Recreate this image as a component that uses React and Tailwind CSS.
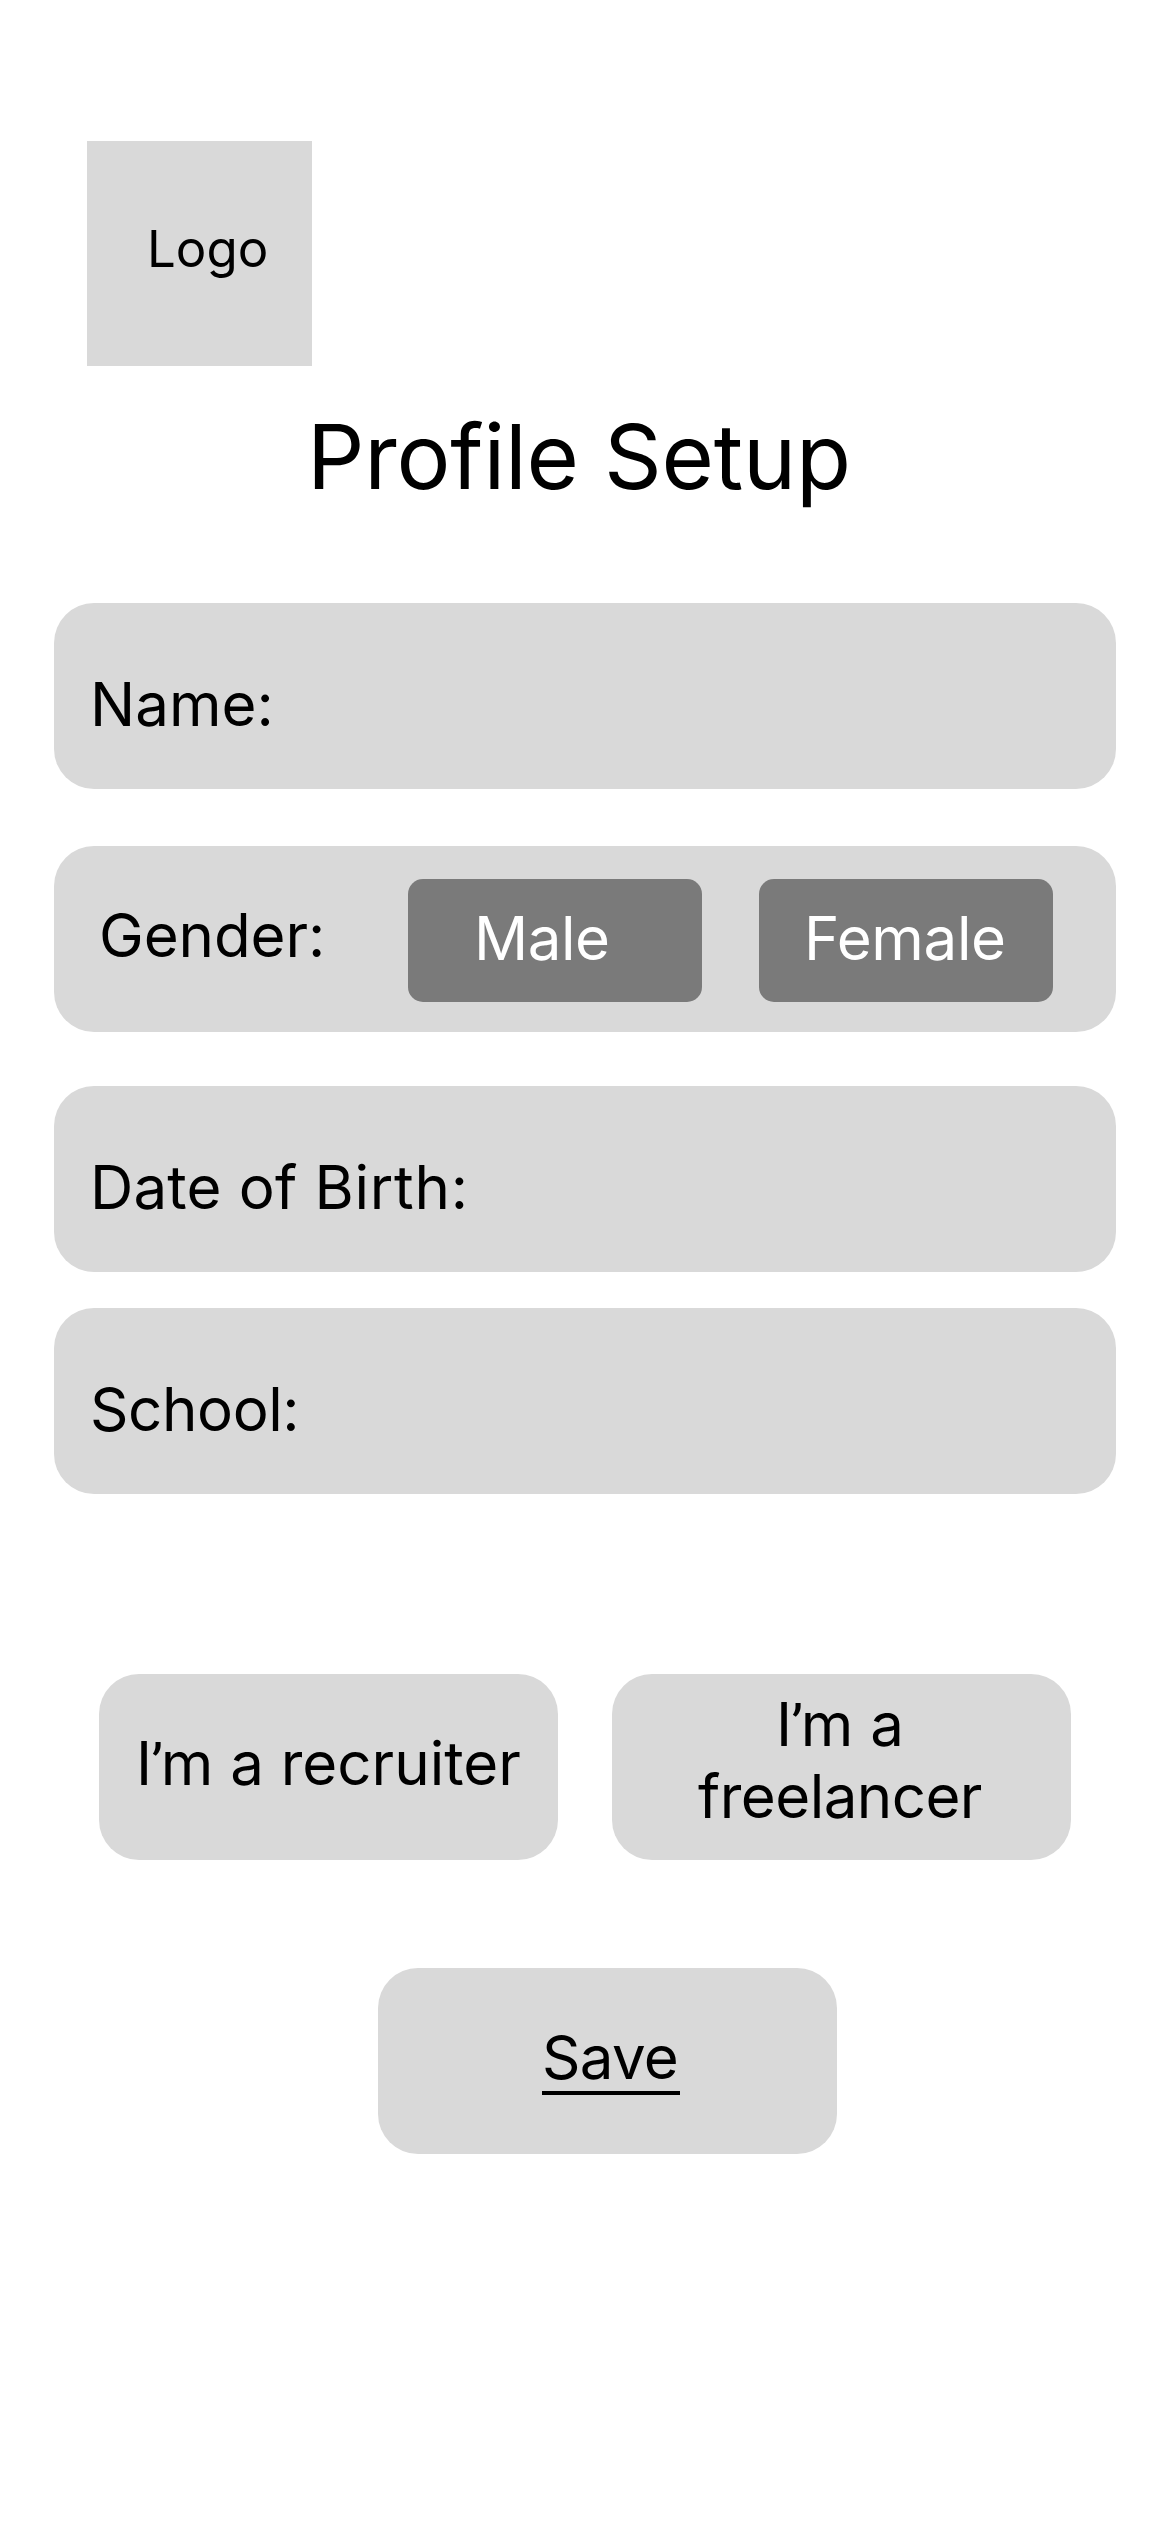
const card = "shrink-0 rounded-[40px] bg-[#d9d9d9] text-[60px] leading-[73px]";
const field = "ml-[54px] w-[1062px] h-[186px] pl-[36px] pt-[65px]";
const genderButton = "flex items-start w-[294px] h-[123px] rounded-[15px] bg-[#7a7a7a] text-white pt-[23px]";

function Im() {
  return (
    <>
      <span className="tracking-[-0.7px]">I</span>
      <span className="font-['Roboto',sans-serif] text-[57px] leading-none tracking-[-2.1px]">’</span>
      m
    </>
  );
}

export default function App() {
  return (
    <main className="w-[1170px] h-[2532px] bg-white text-black font-['Inter',sans-serif] flex flex-col overflow-hidden">
      <div className="mt-[141px] ml-[87px] w-[225px] h-[225px] shrink-0 bg-[#d9d9d9] pt-[77px] pl-[60px] text-[51px] leading-[62px]">
        Logo
      </div>
      <h1 className="mt-[36px] h-[109px] ml-[307px] text-[90px] leading-[109px] tracking-[-0.19px] whitespace-nowrap">
        Profile Setup
      </h1>

      <section className={`${card} ${field} mt-[92px]`}>Name:</section>
      <section className={`${card} mt-[57px] ml-[54px] w-[1062px] h-[186px] flex pt-[33px]`}>
        <span className="w-[354px] pl-[45px] pt-[20px] tracking-[-0.1px]">Gender:</span>
        <button className={`${genderButton} pl-[66px] tracking-[-0.5px]`}>Male</button>
        <button className={`${genderButton} ml-[57px] pl-[45px] tracking-[-0.35px]`}>Female</button>
      </section>
      <section className={`${card} ${field} mt-[54px]`}>
        <span className="tracking-[0.18px]">Date of </span>
        <span className="tracking-[0.78px]">Birth:</span>
      </section>
      <section className={`${card} ${field} mt-[36px] tracking-[-0.4px]`}>School:</section>

      <div className="mt-[180px] ml-[99px] flex gap-[54px]">
        <button className={`${card} flex items-start w-[459px] h-[186px] pl-[37px] pt-[53px] whitespace-nowrap`}>
          <span><Im /> a recruiter</span>
        </button>
        <button className={`${card} flex flex-col items-center w-[459px] h-[186px] pt-[14px] pr-[3px]`}>
          <span className="h-[72px]"><Im /> a</span>
          <span className="tracking-[-0.55px]">freelancer</span>
        </button>
      </div>

      <button className={`${card} mt-[108px] ml-[378px] w-[459px] h-[186px] flex items-start pl-[164px] pt-[53px]`}>
        <span className="w-[138px] h-[74px] text-left border-b-4 border-black tracking-[-0.7px]">Save</span>
      </button>
    </main>
  );
}
